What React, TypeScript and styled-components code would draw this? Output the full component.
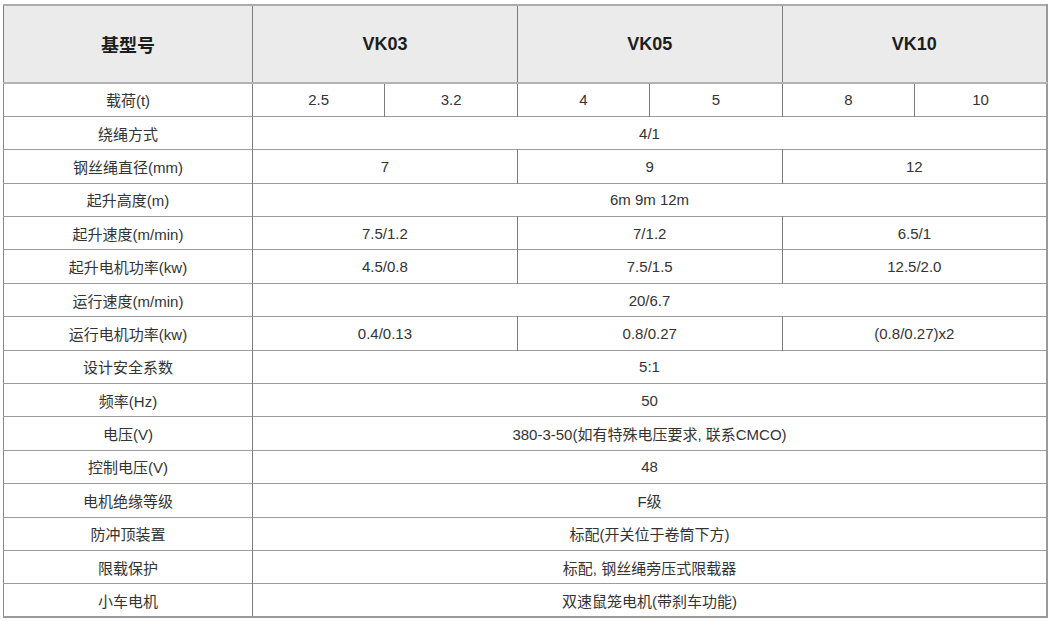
import React from 'react';
import styled, {createGlobalStyle} from 'styled-components';

const GlobalStyle = createGlobalStyle`
    html, body {
        margin: 0;
        padding: 0;
        background: #ffffff;
    }
    body {
        font-family: "Liberation Sans", Arial, "Noto Sans CJK SC", sans-serif;
    }
`

type Cell = { text: string; span?: number };
type Row = { label: string; cells: Cell[] };

const rows: Row[] = [
    {label: '载荷(t)', cells: [{text: '2.5'}, {text: '3.2'}, {text: '4'}, {text: '5'}, {text: '8'}, {text: '10'}]},
    {label: '绕绳方式', cells: [{text: '4/1', span: 6}]},
    {label: '钢丝绳直径(mm)', cells: [{text: '7', span: 2}, {text: '9', span: 2}, {text: '12', span: 2}]},
    {label: '起升高度(m)', cells: [{text: '6m 9m 12m', span: 6}]},
    {label: '起升速度(m/min)', cells: [{text: '7.5/1.2', span: 2}, {text: '7/1.2', span: 2}, {text: '6.5/1', span: 2}]},
    {label: '起升电机功率(kw)', cells: [{text: '4.5/0.8', span: 2}, {text: '7.5/1.5', span: 2}, {text: '12.5/2.0', span: 2}]},
    {label: '运行速度(m/min)', cells: [{text: '20/6.7', span: 6}]},
    {label: '运行电机功率(kw)', cells: [{text: '0.4/0.13', span: 2}, {text: '0.8/0.27', span: 2}, {text: '(0.8/0.27)x2', span: 2}]},
    {label: '设计安全系数', cells: [{text: '5:1', span: 6}]},
    {label: '频率(Hz)', cells: [{text: '50', span: 6}]},
    {label: '电压(V)', cells: [{text: '380-3-50(如有特殊电压要求, 联系CMCO)', span: 6}]},
    {label: '控制电压(V)', cells: [{text: '48', span: 6}]},
    {label: '电机绝缘等级', cells: [{text: 'F级', span: 6}]},
    {label: '防冲顶装置', cells: [{text: '标配(开关位于卷筒下方)', span: 6}]},
    {label: '限载保护', cells: [{text: '标配, 钢丝绳旁压式限载器', span: 6}]},
    {label: '小车电机', cells: [{text: '双速鼠笼电机(带刹车功能)', span: 6}]},
];

const models = ['VK03', 'VK05', 'VK10'];

export default function App() {
    return (
        <>
            <GlobalStyle/>
            <Page>
                <SpecTable>
                    <colgroup>
                        <col style={{width: '249px'}}/>
                        {Array.from({length: 6}).map((_, i) => <col key={i}/>)}
                    </colgroup>
                    <thead>
                        <HeadRow>
                            <HeadCell>基型号</HeadCell>
                            {models.map(m => <HeadCell key={m} colSpan={2}>{m}</HeadCell>)}
                        </HeadRow>
                    </thead>
                    <tbody>
                        {rows.map(row => (
                            <BodyRow key={row.label}>
                                <LabelCell>{row.label}</LabelCell>
                                {row.cells.map((c, i) => (
                                    <ValueCell key={i} colSpan={c.span ?? 1}>{c.text}</ValueCell>
                                ))}
                            </BodyRow>
                        ))}
                    </tbody>
                </SpecTable>
            </Page>
        </>
    );
}

const Page = styled.div`
    padding: 4px 5px 0 3px;
`

const SpecTable = styled.table`
    width: 1045px;
    table-layout: fixed;
    border-collapse: collapse;
    border-top: 2px solid #ababab;
    border-left: 1px solid #8a8a8a;
    border-right: 2px solid #9a9a9a;
    border-bottom: 2px solid #9a9a9a;
    color: #333333;
`

const HeadRow = styled.tr`
    height: 78px;
    background: #ebebeb;
    border-bottom: 2px solid #b3b3b3;
`

const HeadCell = styled.th`
    font-size: 18px;
    font-weight: 700;
    color: #1d1d1d;
    text-align: center;
    vertical-align: middle;
    padding: 0;
    border-left: 1px solid #7d7d7d;
`

const BodyRow = styled.tr`
    height: 33.4px;
    border-bottom: 1px solid #9c9c9c;
`

const LabelCell = styled.td`
    font-size: 15px;
    text-align: center;
    vertical-align: middle;
    padding: 0;
`

const ValueCell = styled.td`
    font-size: 15px;
    text-align: center;
    vertical-align: middle;
    padding: 0;
    border-left: 1px solid #7d7d7d;
`
